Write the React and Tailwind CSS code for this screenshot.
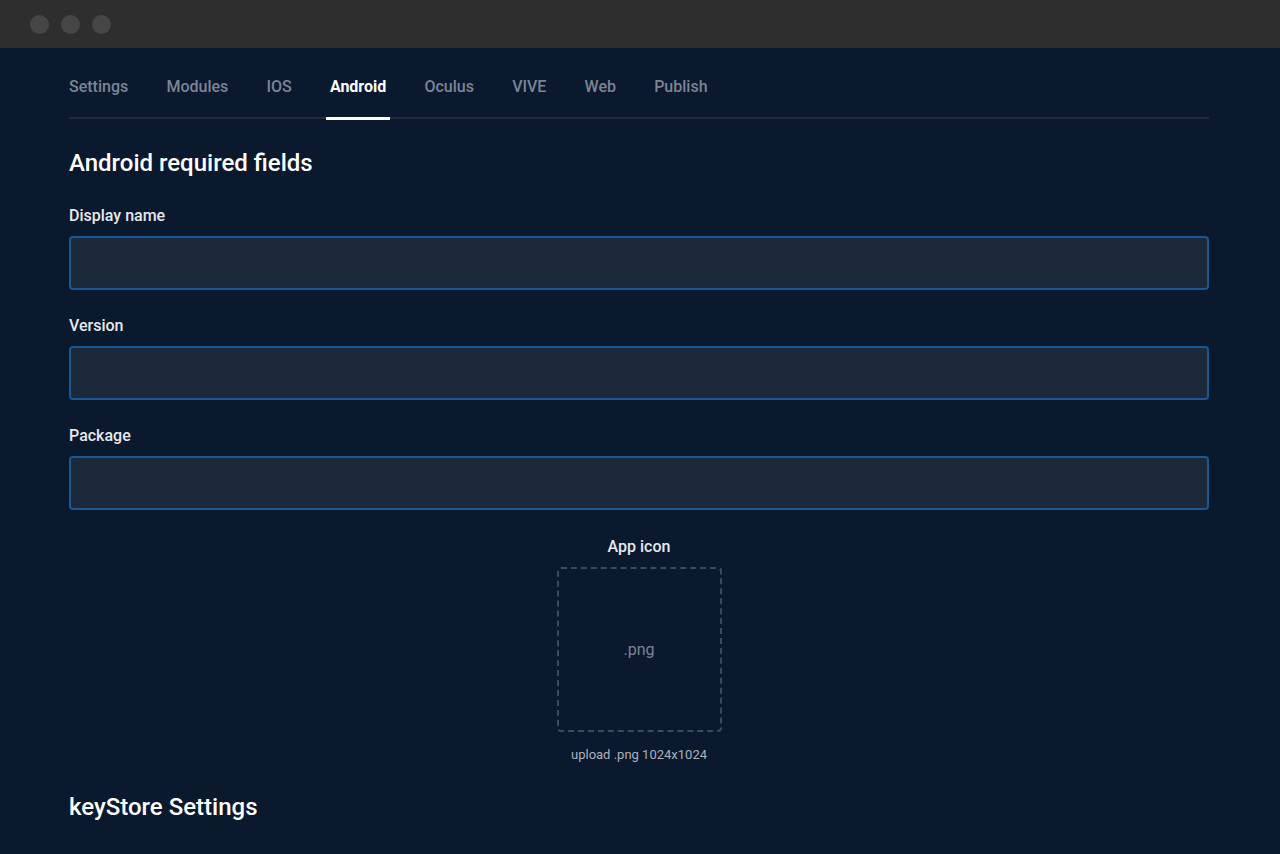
import React from "react";

const tabs = ["Settings", "Modules", "IOS", "Android", "Oculus", "VIVE", "Web", "Publish"];

function Field({ label }) {
  return (
    <div className="flex flex-col">
      <label className="text-[16px] leading-5 font-medium text-[#e6e9ee]">{label}</label>
      <div className="mt-[10px] h-[54px] w-full rounded-[4px] border-2 border-[#1a5794] bg-[#1c293b]" />
    </div>
  );
}

export default function App() {
  return (
    <div className="min-h-[854px] w-[1280px] bg-[#0a192e]" style={{ fontFamily: "Roboto, 'Noto Sans', sans-serif" }}>
      <div className="flex h-12 items-center gap-[12px] bg-[#2e2e2e] pl-[30px]">
        <span className="h-[19px] w-[19px] rounded-full bg-[#464646]" />
        <span className="h-[19px] w-[19px] rounded-full bg-[#464646]" />
        <span className="h-[19px] w-[19px] rounded-full bg-[#464646]" />
      </div>
      <div className="ml-[69px] w-[1140px]">
        <div className="flex gap-[38.2px] border-b-2 border-[#1f2c3e] pt-[27px]">
          {tabs.map((t) => (
            <div key={t} className="relative pb-[18px]">
              <span
                className={
                  t === "Android"
                    ? "text-[16px] leading-6 font-bold text-white"
                    : "text-[16px] leading-6 font-medium text-[#7b8594]"
                }
              >
                {t}
              </span>
              {t === "Android" && (
                <span className="absolute -bottom-[3px] -left-[4px] -right-[4px] h-[3px] bg-white" />
              )}
            </div>
          ))}
        </div>
        <h2 className="mt-[28px] text-[24px] leading-8 font-medium text-white">Android required fields</h2>
        <div className="mt-[27px] flex flex-col gap-[26px]">
          <Field label="Display name" />
          <Field label="Version" />
          <Field label="Package" />
        </div>
        <div className="mt-[27px] flex flex-col items-center">
          <span className="text-[16px] leading-5 font-medium text-[#e6e9ee]">App icon</span>
          <div className="mt-[10px] flex h-[165px] w-[165px] items-center justify-center rounded-[4px] border-2 border-dashed border-[#3b4a5c]">
            <span className="text-[16px] text-[#7b8594]">.png</span>
          </div>
          <span className="mt-[15px] text-[13px] leading-4 text-[#aab2bd]">upload .png 1024x1024</span>
        </div>
        <h2 className="mt-[28px] text-[24px] leading-8 font-medium text-white">keyStore Settings</h2>
      </div>
    </div>
  );
}
